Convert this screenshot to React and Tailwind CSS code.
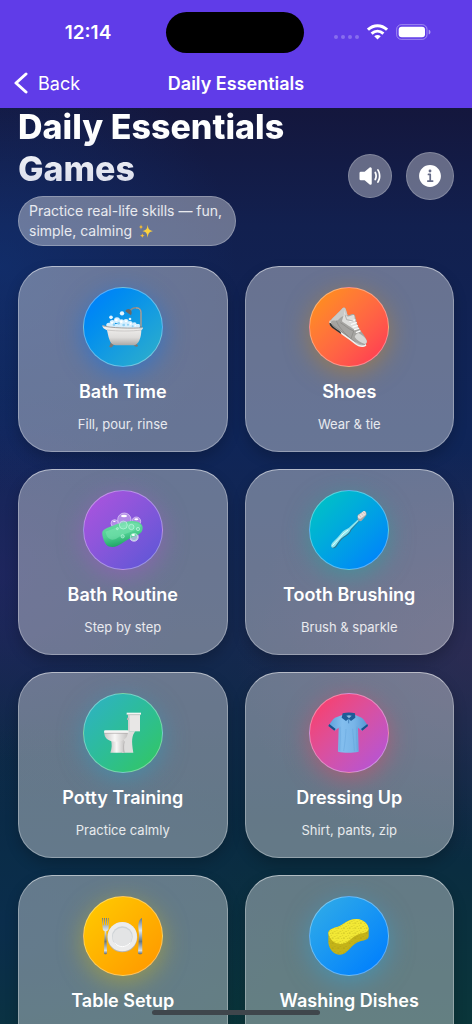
import React from 'react';
import clsx from 'clsx';
import { IoInformationCircle, IoVolumeMedium } from 'react-icons/io5';

function BathIcon() {
  return (
    <svg viewBox="0 0 126 126" className="size-[42px]" aria-hidden="true">
      <defs>
        <linearGradient id="tub" x1="0" y1="0" x2="0" y2="1">
          <stop offset="0" stopColor="#f4f3f1" />
          <stop offset="0.6" stopColor="#dedcda" />
          <stop offset="1" stopColor="#aaa8a6" />
        </linearGradient>
      </defs>
      <path d="M117 64V20C117 9 111 5 102 5c-9 0-15 4-18 11" fill="none" stroke="#8d8a88" strokeWidth="4.5" />
      <path d="M117 60V20C117 10 111 6 102 6" fill="none" stroke="#c5c0bc" strokeWidth="1.5" />
      <path d="M70 16c2-6 10-9 15-5 5 4 5 10 2 17z" fill="#6b6765" />
      <g fill="#e3f5ff">
        <circle cx="60" cy="22" r="6.5" />
        <circle cx="27" cy="34" r="5.5" />
        <circle cx="84" cy="39" r="4" />
      </g>
      <g fill="#d5efff">
        <circle cx="20" cy="57" r="7" />
        <circle cx="31" cy="50" r="8" />
        <circle cx="45" cy="43" r="9" />
        <circle cx="58" cy="49" r="9" />
        <circle cx="72" cy="47" r="8" />
        <circle cx="84" cy="53" r="8" />
        <circle cx="97" cy="56" r="7" />
        <circle cx="108" cy="60" r="6" />
        <path d="M14 54h98v13H14z" />
      </g>
      <g fill="#8fd0f4">
        <circle cx="36" cy="56" r="4" />
        <circle cx="50" cy="52" r="4" />
        <circle cx="65" cy="57" r="4" />
        <circle cx="78" cy="56" r="3" />
        <circle cx="92" cy="61" r="3" />
      </g>
      <g fill="#fff">
        <circle cx="43" cy="42" r="4" />
        <circle cx="30" cy="50" r="3" />
        <circle cx="58" cy="47" r="4" />
        <circle cx="72" cy="46" r="3" />
        <circle cx="86" cy="53" r="3" />
        <circle cx="100" cy="59" r="2" />
      </g>
      <path d="M28 108c-4 1-2 8-6 13-1 4 6 5 9 1l7-8zM96 106c6 2 5 8 12 12 1 5-7 6-10 2l-10-9z" fill="#7c7876" />
      <path d="M1 58c20 7 93 9 121 6 2 3 0 7-4 8 0 20-7 46-24 46H41C21 118 19 86 15 73 7 70 0 65 1 58z" fill="url(#tub)" />
      <path d="M1 59c20 7 93 9 121 6" fill="none" stroke="#77777a" strokeWidth="2" />
      <path d="M15 72c30 4 76 4 103 0" fill="none" stroke="#bbb8b6" strokeWidth="2" />
    </svg>
  );
}

function ShoeIcon() {
  return (
    <svg viewBox="0 0 126 126" className="size-[42px]" aria-hidden="true">
      <path d="M5 44c-3 7 0 15 6 20 26 18 51 36 70 51 10 8 24 11 34 4l-2-7L9 43z" fill="#efefed" />
      <path d="M4 50c0 7 3 10 8 15l28 20-2-7L9 52z" fill="#322f2e" />
      <path d="M44 6c5-4 9 0 10 6 2 6 4 12 5 16 7 0 12-7 19-3 4 3 4 9 6 15 2 11 5 19 11 30 7 12 21 24 21 38 0 8-9 10-18 7C84 111 66 97 51 86 35 74 12 63 8 50c-2-8 1-10 7-15C26 25 35 16 44 6z" fill="#a5a4a1" />
      <path d="M44 6c5-4 9 0 10 6 2 6 4 12 5 16-7 3-15 1-22 7-5 4-8 11-15 9-6-1-10 0-13 4 0-7 2-9 6-13C26 25 35 16 44 6z" fill="#c9c9c7" />
      <path d="M49 10c2 7 2 16 8 21 8 2 14-6 21-4 3 6 1 12 4 18l9 20-10 7C69 64 51 53 42 46c2-11 8-20 7-36z" fill="#dededc" />
      <path d="M37 50c13 7 24 20 40 25l-8 23M25 44c6 17 19 31 37 48" fill="none" stroke="#888784" strokeWidth="2" />
      <path d="M91 81c-6 3-10 6-11 12 8 11 17 17 31 21 6-2 7-8 4-13-5-8-13-14-24-20z" fill="#d6d6d4" />
      <path d="M66 46l15-4M70 55l15-5M75 63l13-4M80 71l12-4M85 79l11-4" stroke="#fafaf9" strokeWidth="4" strokeLinecap="round" />
      <path d="M51 26l5 15 20 4" fill="none" stroke="#989795" strokeWidth="2" />
      <path d="M12 56c28 20 52 38 76 57 8 4 16 5 24 2" fill="none" stroke="#777" strokeWidth="1.5" />
    </svg>
  );
}

function SoapIcon() {
  return (
    <svg viewBox="0 0 126 126" className="size-[42px]" aria-hidden="true">
      <defs>
        <linearGradient id="soap" x1="0" y1="0" x2="0.3" y2="1">
          <stop offset="0" stopColor="#6fdda6" />
          <stop offset="0.6" stopColor="#4fcf92" />
          <stop offset="1" stopColor="#1fa565" />
        </linearGradient>
      </defs>
      <g fill="#b28be6" stroke="#e5d6fb" strokeWidth="2">
        <circle cx="67" cy="32" r="20" />
        <circle cx="103" cy="37" r="13" />
        <circle cx="38" cy="43" r="11" />
        <circle cx="96" cy="84" r="13" />
      </g>
      <path d="M6 62C24 52 60 38 88 36c20-1 34 8 34 20 0 16-13 21-28 27-19 8-33 21-49 28-11 5-26 3-32-4C6 99 3 88 1 78c-1-8 0-13 5-16z" fill="url(#soap)" />
      <path d="M10 68c25-9 45-16 62-23 18-6 38-6 46 6-15 16-47 19-73 37-10 7-22 5-28-3-4-6-5-11-7-17z" fill="#86e8b9" opacity="0.45" />
      <g fill="#90e8c2" fillOpacity="0.5" stroke="#d9fff1" strokeWidth="1.5">
        <circle cx="64" cy="48" r="12" />
        <circle cx="88" cy="54" r="8" />
        <circle cx="46" cy="59" r="3" />
        <circle cx="62" cy="82" r="5" />
        <circle cx="108" cy="60" r="5" />
        <circle cx="96" cy="84" r="11" />
      </g>
      <g fill="#fff">
        <ellipse cx="66" cy="21" rx="9" ry="4" />
        <ellipse cx="103" cy="31" rx="6" ry="3" />
        <ellipse cx="37" cy="37" rx="4" ry="2" />
        <ellipse cx="94" cy="78" rx="5" ry="3" />
      </g>
    </svg>
  );
}

function ToothbrushIcon() {
  return (
    <svg viewBox="0 0 126 126" className="size-[42px]" aria-hidden="true">
      <path d="M13 117c4 3 10-1 14-6 8-11 12-20 22-26 13-8 17-11 21-22l24-26-4-3-26 24c-9 5-18 7-24 16-7 12-17 19-26 29-4 5-5 10-1 14z" fill="#2b7692" />
      <path d="M11 115c3 3 9-1 13-6 8-11 12-20 22-26 12-7 18-12 22-22l25-26-4-3-26 24c-9 5-17 8-23 16-8 11-17 19-27 29-4 5-5 11-2 14z" fill="#8be4ed" />
      <path d="M14 109c11-13 22-22 31-34l15-12" fill="none" stroke="#e7ffff" strokeWidth="3" strokeLinecap="round" />
      <path d="M89 24c-2-4 1-8 6-10l13-8c6-1 9 7 7 13l-14 16c-6 4-14-1-12-11z" fill="#a8a5a5" />
      <path d="M90 20l16-13c5-3 9 5 7 10L98 29c-6 2-10-4-8-9z" fill="#e8e1df" />
      <path d="M94 18l5 7M100 13l5 7M106 9l4 6" stroke="#bdb3b1" strokeWidth="2" />
    </svg>
  );
}

function ToiletIcon() {
  return (
    <svg viewBox="0 0 126 126" className="size-[42px]" aria-hidden="true">
      <defs>
        <linearGradient id="porcelain" x1="0" y1="0" x2="1" y2="0">
          <stop offset="0" stopColor="#c9c7c6" />
          <stop offset="0.45" stopColor="#f8f7f6" />
          <stop offset="1" stopColor="#c4c2c1" />
        </linearGradient>
      </defs>
      <path d="M62 58h38c-11 14-12 28-6 64H60z" fill="#deddDC" />
      <path d="M27 84h39c-3 11-3 24 1 38H25c5-14 5-25 2-38z" fill="url(#porcelain)" />
      <path d="M67 88c-3 11-3 24 0 34" fill="none" stroke="#a7a5a4" strokeWidth="2" />
      <path d="M78 7h36v51H78z" fill="#e8e7e6" />
      <path d="M78 7h5v51h-5z" fill="#d0cfce" />
      <path d="M74 2h43v6H74z" fill="#f6f5f4" />
      <path d="M75 8h41" stroke="#b7b5b4" strokeWidth="2" />
      <path d="M75 17h5v7h-5z" fill="#b4b2b1" />
      <path d="M7 60h70c1 16-10 29-35 29S6 77 7 60z" fill="url(#porcelain)" />
      <rect x="6" y="55" width="74" height="8" rx="4" fill="#f5f4f3" />
      <path d="M8 64h69" stroke="#aaa8a7" strokeWidth="2" />
    </svg>
  );
}

function ShirtIcon() {
  return (
    <svg viewBox="0 0 126 126" className="size-[42px]" aria-hidden="true">
      <defs>
        <linearGradient id="shirt" x1="0" y1="0" x2="1" y2="0">
          <stop offset="0" stopColor="#5d9fda" />
          <stop offset="0.35" stopColor="#83beee" />
          <stop offset="0.65" stopColor="#78b5e8" />
          <stop offset="1" stopColor="#5796d3" />
        </linearGradient>
      </defs>
      <path d="M43 9L21 17C12 24 7 33 1 41l19 15 12-9-2 72c18 4 43 4 62 0l-2-72 12 9 18-15c-6-8-10-17-19-24L82 9z" fill="url(#shirt)" />
      <path d="M4 36l19 15-4 5L1 42zM118 36l-19 15 4 5 17-14z" fill="#17538c" />
      <path d="M44 4c12-3 26-3 37 0l1 13-13 10-7-7-8 7-13-10z" fill="#1d5b98" />
      <path d="M55 11c5-2 11-2 16 0l-8 8z" fill="#8ab8de" />
      <path d="M62 20v14" stroke="#2d6da9" strokeWidth="2" />
      <path d="M36 44c2 27 0 48-1 72M87 44c-2 27 0 48 1 72M54 51c-1 24-3 40-7 66M74 50c1 24 4 40 5 68" fill="none" stroke="#4d8ecb" strokeWidth="1.5" opacity="0.5" />
    </svg>
  );
}

function PlateIcon() {
  return (
    <svg viewBox="0 0 126 126" className="size-[42px]" aria-hidden="true">
      <defs>
        <linearGradient id="steel" x1="0" y1="0" x2="0" y2="1">
          <stop offset="0" stopColor="#697885" />
          <stop offset="0.35" stopColor="#dce7ef" />
          <stop offset="0.65" stopColor="#667684" />
          <stop offset="0.9" stopColor="#d6dfe6" />
          <stop offset="1" stopColor="#5c6770" />
        </linearGradient>
      </defs>
      <circle cx="61" cy="67" r="45" fill="#b9b4ae" />
      <circle cx="61" cy="65" r="44" fill="#ececec" />
      <circle cx="61" cy="65" r="31" fill="#cdd2d6" />
      <circle cx="61" cy="67" r="29" fill="#e3e4e5" />
      <path d="M37 83c13 16 35 16 48 0" fill="none" stroke="#fff" strokeWidth="3" />
      <path d="M0 9h3v22h3V9h3v22h3V9h3v22h3V9h2v31c0 5-4 8-7 9l2 64c0 6-9 6-9 0l2-64c-3-1-6-4-6-9z" fill="url(#steel)" />
      <path d="M120 9c-8 3-12 16-11 30l2 20-3 54c0 6 13 6 13 0z" fill="url(#steel)" />
    </svg>
  );
}

function SpongeIcon() {
  return (
    <svg viewBox="0 0 126 126" className="size-[42px]" aria-hidden="true">
      <defs>
        <pattern id="pores" width="17" height="15" patternUnits="userSpaceOnUse">
          <circle cx="3" cy="4" r="1.3" fill="#94890f" />
          <circle cx="10" cy="2" r="1" fill="#b4a817" />
          <circle cx="14" cy="9" r="1.5" fill="#928710" />
          <circle cx="7" cy="11" r="1.2" fill="#b4a817" />
        </pattern>
      </defs>
      <path d="M1 52c3-12 21-13 34-19 16-8 28-22 51-21 21 2 35 16 36 31v22c-4 13-22 10-36 18-15 8-24 26-40 34-22 8-42-10-45-34z" fill="#c4b318" />
      <path d="M1 54c3-14 21-15 34-21 16-8 28-21 51-21 21 0 35 16 36 29-4 14-20 12-34 18-16 7-24 20-38 26-22 8-46-8-49-31z" fill="#f2e835" />
      <path d="M1 52c3-12 21-13 34-19 16-8 28-22 51-21 21 2 35 16 36 31v22c-4 13-22 10-36 18-15 8-24 26-40 34-22 8-42-10-45-34z" fill="url(#pores)" />
    </svg>
  );
}

function Sparkles() {
  return (
    <svg viewBox="0 0 48 48" className="ml-1.5 inline size-4 align-text-bottom" aria-hidden="true">
      <path d="M29 5c2 13 4 16 16 19-12 3-14 6-16 20-2-14-4-17-16-20 12-3 14-6 16-19z" fill="#fbd13d" />
      <path d="M9 4c1 6 2 7 7 8-5 1-6 2-7 8-1-6-2-7-7-8 5-1 6-2 7-8zM13 31c1 5 2 6 7 7-5 1-6 2-7 7-1-5-2-6-7-7 5-1 6-2 7-7z" fill="#f8bf34" />
    </svg>
  );
}

const GAMES = [
  { title: 'Bath Time', subtitle: 'Fill, pour, rinse', icon: BathIcon, circle: 'from-[#007aff] to-[#30b0c7] shadow-[0_6px_24px_#1a74e0a0]' },
  { title: 'Shoes', subtitle: 'Wear & tie', icon: ShoeIcon, circle: 'from-[#ff9500] to-[#ff2d55] shadow-[0_6px_24px_#b5802ca0]' },
  { title: 'Bath Routine', subtitle: 'Step by step', icon: SoapIcon, circle: 'from-[#af52de] to-[#5856d6] shadow-[0_6px_24px_#9a5ec0a0]' },
  { title: 'Tooth Brushing', subtitle: 'Brush & sparkle', icon: ToothbrushIcon, circle: 'from-[#00c7be] to-[#007aff] shadow-[0_6px_24px_#2fa0a0a0]' },
  { title: 'Potty Training', subtitle: 'Practice calmly', icon: ToiletIcon, circle: 'from-[#30b0c7] to-[#34c759] shadow-[0_6px_24px_#3a98b8a0]' },
  { title: 'Dressing Up', subtitle: 'Shirt, pants, zip', icon: ShirtIcon, circle: 'from-[#ff375f] to-[#af52de] shadow-[0_6px_24px_#d0506ca0]' },
  { title: 'Table Setup', icon: PlateIcon, circle: 'from-[#ffcc00] to-[#ff9500] shadow-[0_6px_24px_#b8ac30a0]' },
  { title: 'Washing Dishes', icon: SpongeIcon, circle: 'from-[#32ade6] to-[#007aff] shadow-[0_6px_24px_#3a9cc8a0]' },
];

function StatusBar() {
  return (
    <div className="flex h-[60px] items-start justify-between pt-3">
      <div className="flex h-[42px] flex-1 items-center justify-center pl-2.5 text-[19px] font-semibold">12:14</div>
      <div className="h-[41px] w-[138px] rounded-full bg-black" />
      <div className="flex h-10 flex-1 items-center justify-center gap-2 pr-3">
        <div className="flex gap-[3px] pt-2.5">
          {[0, 1, 2, 3].map(i => (
            <span key={i} className="size-1 rounded-full bg-white/25" />
          ))}
        </div>
        <svg viewBox="0 0 64 48" className="h-4 w-[21px]" aria-hidden="true">
          <g fill="none" stroke="#fff" strokeWidth="9">
            <path d="M3 17C20 1 44 1 61 17" />
            <path d="M14 29c11-10 25-10 36 0" />
          </g>
          <path d="M32 47L22 37c6-5 14-5 20 0z" fill="#fff" />
        </svg>
        <svg viewBox="0 0 105 48" className="h-4 w-[35px]" aria-hidden="true">
          <rect x="2" y="2" width="91" height="44" rx="14" fill="none" stroke="#fff" strokeOpacity="0.4" strokeWidth="3" />
          <rect x="8" y="8" width="79" height="32" rx="9" fill="#fff" />
          <path d="M98 17c7 1 7 13 0 14z" fill="#fff" fillOpacity="0.5" />
        </svg>
      </div>
    </div>
  );
}

function NavBar() {
  return (
    <nav className="grid h-12 grid-cols-[1fr_auto_1fr] items-center px-[14px] pb-0.5">
      <button type="button" className="flex items-center gap-2.5 text-[18px]">
        <svg viewBox="0 0 14 22" className="h-[22px] w-[14px]" fill="none" stroke="currentColor" strokeWidth="3" strokeLinecap="round" strokeLinejoin="round" aria-hidden="true">
          <path d="M12 2L2 11l10 9" />
        </svg>
        Back
      </button>
      <span className="text-[18px] font-semibold">Daily Essentials</span>
    </nav>
  );
}

function GameCard({ game }) {
  const Icon = game.icon;
  return (
    <button
      type="button"
      className="flex min-h-[186px] flex-col items-center rounded-[34px] border border-white/30 border-t-white/50 bg-white/[0.37] pt-5 pb-[18px] shadow-[0_6px_14px_rgba(0,0,0,0.2)]"
    >
      <span className={clsx('flex size-20 items-center justify-center rounded-full border border-white/35 bg-linear-to-br', game.circle)}>
        <Icon />
      </span>
      <span className="mt-3 text-[18px] leading-[26px] font-semibold">{game.title}</span>
      {game.subtitle && (
        <span className="mt-2.5 text-[13px] leading-[18px] text-white/85">{game.subtitle}</span>
      )}
    </button>
  );
}

export default function App() {
  return (
    <div className="relative flex h-screen flex-col overflow-hidden bg-[radial-gradient(ellipse_50%_22%_at_0%_26%,#12388080,transparent),radial-gradient(ellipse_40%_18%_at_0%_56%,#28246880,transparent),radial-gradient(ellipse_50%_20%_at_100%_64%,#3c2e5690,transparent),radial-gradient(ellipse_60%_20%_at_0%_90%,#0a2c50c0,transparent),linear-gradient(#14163c_10%,#12204f_22%,#0f2558_42%,#15284f_62%,#0a2a42_80%,#0a363a)] font-['Inter',sans-serif] text-white">
      <header className="z-10 shrink-0 bg-[#603ce8]">
        <StatusBar />
        <NavBar />
      </header>

      <main className="-mt-0.5 min-h-0 flex-1 overflow-hidden px-[18px]">
        <section className="flex items-center justify-between">
          <div>
            <h1 className="bg-linear-to-b from-white from-30% to-[#d5d9e8] bg-clip-text text-[34px] leading-[42px] font-extrabold text-transparent">
              Daily Essentials
              <br />
              Games
            </h1>
            <p className="mt-1.5 w-[218px] rounded-[25px] border border-white/25 bg-white/[0.37] px-2.5 py-1 text-[14px] leading-5 text-white/85">
              Practice real-life skills — fun, simple, calming
              <Sparkles />
            </p>
          </div>
          <div className="flex items-center gap-3.5">
            <button type="button" aria-label="Sound" className="flex size-11 items-center justify-center rounded-full border border-white/20 bg-white/35">
              <IoVolumeMedium className="size-7" />
            </button>
            <button type="button" aria-label="Info" className="flex size-12 items-center justify-center rounded-full border border-white/20 bg-white/35">
              <IoInformationCircle className="size-7" />
            </button>
          </div>
        </section>

        <section className="mt-5 grid grid-cols-2 gap-[17px]">
          {GAMES.map(game => (
            <GameCard key={game.title} game={game} />
          ))}
        </section>
      </main>

      {/* home indicator */}
      <div className="absolute bottom-[9px] left-1/2 h-[5px] w-[168px] -translate-x-1/2 rounded-full bg-[#3f464c]" />
    </div>
  );
}
